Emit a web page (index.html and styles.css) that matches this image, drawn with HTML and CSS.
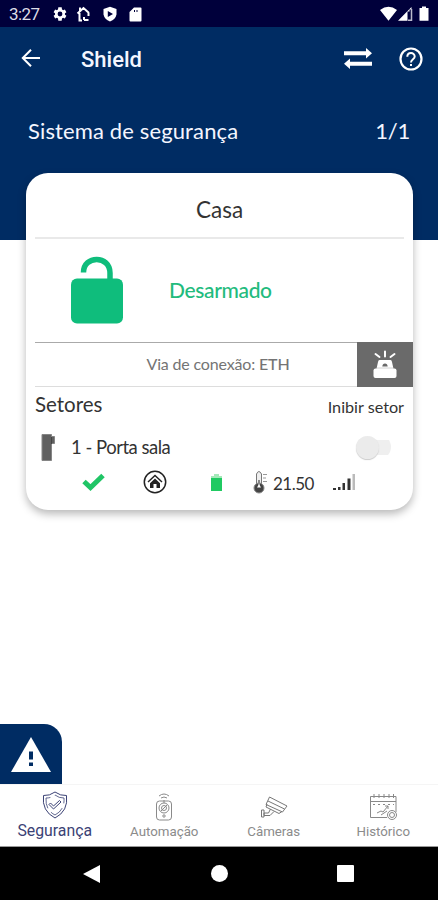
FILE: index.html
```html
<!DOCTYPE html>
<html lang="pt-BR">
<head>
<meta charset="utf-8">
<title>Shield</title>
<link rel="stylesheet" href="styles.css">
</head>
<body>
<div class="screen">
  <header class="hero">
    <div class="status">
      <span class="clock">3:27</span>
      <svg class="s-gear" width="16" height="16" viewBox="0 0 24 24"><path fill="#fff" fill-rule="evenodd" d="M19.4 13a7.500 7.500 0 0 0 0-2l2.200-1.700-2.300-4-2.600 1a7.500 7.500 0 0 0-1.700-1L14.500 2h-5L9 5.300a7.500 7.500 0 0 0-1.700 1l-2.600-1-2.300 4L4.600 11a7.500 7.500 0 0 0 0 2l-2.200 1.700 2.300 4 2.600-1a7.500 7.500 0 0 0 1.700 1l.5 3.300h5l.5-3.300a7.500 7.500 0 0 0 1.700-1l2.600 1 2.300-4zM12 8.400a3.600 3.600 0 1 1 0 7.200 3.600 3.600 0 0 1 0-7.200z"/></svg>
      <svg class="s-home" width="16" height="16" viewBox="0 0 16 16"><path fill="none" stroke="#fff" stroke-width="2" d="M1.500 7.500 7.500 2 13 7M4 1.500v4M3.500 7v7.500H6M8 14h4.500M12.500 7v3M8 14v-3"/></svg>
      <svg class="s-shield" width="16" height="16" viewBox="0 0 16 16"><path fill="#fff" fill-rule="evenodd" d="M8 .8 14.500 3v5.500q-1 5-6.500 7-5.500-2-6.500-7V3zM5.800 5v6L11 8z"/></svg>
      <svg class="s-card" width="13" height="15" viewBox="0 0 13 15"><path fill="#fff" fill-rule="evenodd" d="M5 .5h6.500q1 0 1 1v12q0 1-1 1h-10q-1 0-1-1V5zM5 3v2h1V3zm2.500 0v2h1V3z"/></svg>
      <span class="spacer"></span>
      <svg width="50" height="16" viewBox="0 0 50 16"><path fill="#fff" d="M0 4q8.500-6.500 17 0L8.500 14.800zM18 14.800 31.500 1v2.500h-2v2h-2v9.300z"/><path fill="none" stroke="#bbc" stroke-width="1.500" d="M28 14.200h3.500V3"/><path fill="#fff" d="M42 .5h4V2h2.500v12.800h-9V2H42z"/></svg>
    </div>
    <div class="appbar">
      <svg class="back" width="20" height="20" viewBox="0 0 20 20"><path fill="none" stroke="#fff" stroke-width="2" d="M19 10H2M10 1.800 1.800 10l8.200 8.200"/></svg>
      <h1>Shield</h1>
      <svg class="swap" width="28" height="21" viewBox="0 0 28 21"><path fill="#fff" d="M0 3.300h22V0l6 5.300-6 5.200V7.300H0zM28 13.700H6V10.500l-6 5.300L6 21v-3.300h22z"/></svg>
      <svg class="help" width="24" height="24" viewBox="0 0 24 24"><circle cx="12" cy="12" r="10.500" fill="none" stroke="#fff" stroke-width="2.200"/><path fill="none" stroke="#fff" stroke-width="2" d="M8.300 9.800C8.300 4.800 15.700 5 15.700 9.500c0 2.800-3.700 2.600-3.700 6"/><path fill="#fff" d="M11 17h2v2h-2z"/></svg>
    </div>
    <div class="subhead"><span>Sistema de segurança</span><span class="count">1/1</span></div>
  </header>

  <main class="card">
    <h2>Casa</h2>
    <div class="state">
      <svg width="52" height="68" viewBox="0 0 52 68"><rect y="22.500" width="52" height="45" rx="6" fill="#0fbd7c"/><path fill="none" stroke="#0fbd7c" stroke-width="5.500" d="M12.500 16.500C12.500-1 39 -1 39 17v8"/></svg>
      <span>Desarmado</span>
    </div>
    <div class="link">
      <div class="via">Via de conexão: <b>ETH</b></div>
      <div class="siren"><svg width="24" height="29" viewBox="0 0 24 29"><path fill="none" stroke="#fff" stroke-width="2" stroke-linecap="round" d="m2.500 4 4 3M12 1.500v5M21.500 4l-4 3"/><path fill="#fff" d="M6.500 10h11q1.200 0 1.500 2l1.200 5.500v2H3.800v-2L5 12q.3-2 1.500-2z"/><path fill="#6a6a6a" d="M9.300 16.500q.3-3 2.700-3t2.700 3z"/><path stroke="#aaa" stroke-width=".8" d="M3 18.200h18"/><rect x=".5" y="18.500" width="23" height="9.500" rx="2" fill="#fff"/></svg></div>
    </div>
    <div class="sectors"><span>Setores</span><span class="inhibit">Inibir setor</span></div>
    <div class="zone">
      <svg width="14" height="27" viewBox="0 0 14 27"><path fill="#606060" stroke="#858585" d="M1 .5h9.500v2H13.500v7h-3v17H1z"/><path stroke="#444" d="M10.500 3v7"/></svg>
      <span>1 - Porta sala</span>
      <i class="switch"></i>
    </div>
    <div class="metrics">
      <svg class="check" width="23" height="18" viewBox="0 0 23 18"><path fill="none" stroke="#20c566" stroke-width="5" d="m2 8.500 6.500 6L21 2.500"/></svg>
      <svg class="house" width="24" height="24" viewBox="0 0 24 24"><circle cx="12" cy="12" r="10.700" fill="none" stroke="#222" stroke-width="1.500"/><path fill="none" stroke="#222" stroke-width="1.500" d="m5 12 7-6.500 7 6.500"/><path fill="#222" d="m12 8.500 5 4.700V18h-3.500v-4h-3v4H7v-4.800z"/></svg>
      <svg class="battery" width="11" height="19" viewBox="0 0 11 19"><path fill="#a4e9b9" d="M3 1h5v2h3v4H0V3h3z"/><path fill="#20ca62" d="M0 5h11v13H0z"/></svg>
      <svg class="thermo" width="15" height="24" viewBox="0 0 15 24"><path fill="#eee" stroke="#777" d="M3.500 14V4q2.300-5 5 0v10"/><circle cx="6" cy="18" r="5" fill="#444" stroke="#888"/><path fill="#888" d="M5 10h2v7H5z"/><path fill="#fff" d="m6 14 2 3.500H4z"/><path stroke="#999" d="M10 4.500h4M10 8h3M10 11.500h4"/></svg>
      <span>21.50</span>
      <svg class="signal" width="23" height="17" viewBox="0 0 23 17"><path fill="#333" d="M0 14h3v2H0zM5 13h2.500v3H5zM9.500 9H12v7H9.500zM14.500 4.500H17.500v11.500h-3z"/><path fill="#bbb" d="M19.500 0h2.500v16h-2.500z"/></svg>
    </div>
  </main>

  <div class="alert"><svg width="40" height="35" viewBox="0 0 40 35"><path fill="#fff" d="m20 0 20 35H0z"/><path stroke="#002c63" stroke-width="4" d="M20 14.500v8M20 25.500v3.500"/></svg></div>

  <nav class="tabs">
    <div class="tab active">
      <svg width="26" height="28" viewBox="0 0 26 28"><g fill="none" stroke="#3b4275"><path d="M13 1Q18.500 5 24.500 4.500 26.500 20 13 27-.5 20 1.500 4.500 7.500 5 13 1z"/><path d="M13 4q4 3.200 9 3 .8 12-9 17-9.800-5-9-17 5 .2 9-3z" stroke-width=".8" stroke-dasharray="15 5"/><path d="m7 13.500 1.500-1.500 3 3 6-5.500 1.500 1.500-7.500 7z"/></g></svg>
      <span>Segurança</span>
    </div>
    <div class="tab auto">
      <svg width="18" height="28" viewBox="0 0 18 28"><g fill="none" stroke="#8a8a8a"><path d="M4 3q5-4 10 0M6 5q3-2 6 0"/><rect x="1.500" y="8" width="15" height="19" rx="3"/><circle cx="9" cy="15" r="5"/><circle cx="9" cy="15" r="2.500"/><path d="m6 18 6-6M9 7v3"/><circle cx="9" cy="23" r="1.200"/></g></svg>
      <span>Automação</span>
    </div>
    <div class="tab cam">
      <svg width="28" height="24" viewBox="0 0 28 24"><g fill="none" stroke="#777"><path d="M9.500 2 27 11l-4.500 6L6 9.500zM8 6l16.500 8M7 9l-1 3 13 6.500 3-2M10.500 14l-2 4H4v2.500h6l4-4M1.500 15v7H4v-7z"/></g></svg>
      <span>Câmeras</span>
    </div>
    <div class="tab hist">
      <svg width="29" height="28" viewBox="0 0 29 28"><g fill="none" stroke="#888"><path d="M18 24.500H1.500v-21H27V19M1.500 8.500H27"/><path stroke-dasharray="2 3" d="M4 11.500h21"/><path d="M5 1v4M10 1v4M15 1v4M20 1v4M24.500 1v4M8 20l4-2 2 1 5-6M12 22l6-4M16 13h3v3"/><circle cx="23" cy="22" r="4.500"/><circle cx="23" cy="22" r="2.500"/></g></svg>
      <span>Histórico</span>
    </div>
  </nav>
  <footer class="sysnav">
    <svg width="17" height="18" viewBox="0 0 17 18"><path fill="#fff" d="M17 0v18L0 9z"/></svg>
    <i class="dot"></i>
    <i class="square"></i>
  </footer>
</div>
</body>
</html>
```

FILE: styles.css
```css
* { box-sizing: border-box; }
body { margin: 0; background: #fff; font-family: Lato, sans-serif; }
svg { display: block; flex: none; }
.screen { width: 438px; height: 900px; display: flex; flex-direction: column; overflow: hidden; }
.hero { height: 240px; flex: none; background: #002c63; color: #f4f6ff; }
.status { height: 27px; background: #00003b; display: flex; align-items: center; padding: 1px 8px 0 9px; font: 17px Roboto, sans-serif; }
.clock { width: 43px; letter-spacing: -.6px; color: #dddde6; }
.s-home { margin-left: 8px; }
.s-shield { margin-left: 10px; }
.s-card { margin-left: 11px; }
.spacer { flex: 1; }
.appbar { height: 63px; display: flex; align-items: center; padding: 0 15px 0 21px; }
.appbar h1 { margin: 2px 0 0 40px; flex: 1; font: 500 22px Roboto, sans-serif; }
.back { margin-bottom: 2px; }
.swap { margin-right: 27px; }
.subhead { display: flex; justify-content: space-between; padding: 26px 28px 0; font-size: 22px; line-height: 30px; letter-spacing: .13px; }
.count { letter-spacing: -.2px; }
.card { width: 387px; height: 337px; flex: none; margin: -67px 0 0 26px; border-radius: 22px; background: #fff; box-shadow: 0 4px 8px rgba(0,0,0,.28); color: #333; }
.card h2 { height: 66px; margin: 0 9px; border-bottom: 2px solid #e9e9e9; text-align: center; font-size: 22.5px; font-weight: 400; line-height: 73px; }
.state { height: 103px; display: flex; align-items: center; padding: 0 0 1px 45px; gap: 46px; font-size: 21px; font-weight: 500; letter-spacing: -.35px; color: #22bb7d; }
.state span { padding-bottom: 2px; }
.link { height: 45px; display: flex; padding-left: 9px; font-size: 16px; letter-spacing: -.17px; color: #747474; }
.via { flex: 1; display: flex; justify-content: center; align-items: center; gap: 4px; border-top: 1px solid #aaa; border-bottom: 1px solid #ddd; padding: 0 0 2px 44px; }
.via b { font-weight: 500; }
.siren { width: 56px; background: #6a6a6a; display: flex; align-items: center; justify-content: center; }
.sectors { height: 38px; display: flex; justify-content: space-between; align-items: center; padding: 0 9px 5px; font-size: 20.5px; }
.inhibit { font-size: 16.2px; padding-top: 5px; }
.zone { height: 42px; display: flex; align-items: center; padding: 2px 22px 0 15px; font-size: 18.5px; letter-spacing: -.5px; }
.zone span { flex: 1; margin-left: 16px; }
.switch { width: 35px; height: 24px; display: flex; align-items: center; background: linear-gradient(#efefef, #efefef) right center / 30px 15px no-repeat; border-radius: 12px; }
.switch::before { content: ""; width: 23px; height: 23px; border-radius: 50%; background: #ebebeb; box-shadow: 0 1px 1px #ccc; }
.metrics { height: 32px; display: flex; align-items: center; padding: 0 0 2px 56px; font-size: 17px; letter-spacing: -.5px; }
.house { margin-left: 38px; }
.battery { margin-left: 44px; }
.thermo { margin-left: 31px; }
.metrics span { width: 42px; margin: 3px 0 0 5px; }
.signal { margin-left: 18px; }
.alert { width: 62px; height: 60px; margin-top: auto; flex: none; background: #002c63; border-radius: 0 18px 0 0; display: flex; align-items: center; justify-content: center; }
.tabs { height: 63px; flex: none; display: flex; border-top: 1px solid #f5f5f5; border-bottom: 1px solid #999; font: 13.3px Roboto, sans-serif; color: #8b8b8b; }
.tab { flex: 1; display: flex; flex-direction: column; align-items: center; padding-top: 8px; }
.tab span { margin-top: 2px; line-height: 18px; }
.active { color: #3b4275; font-size: 15.8px; padding-top: 6px; }
.active span { margin-top: 3px; }
.cam svg { margin: 2px 0; }
.sysnav { height: 53px; flex: none; background: #000; display: flex; align-items: center; padding-left: 83px; }
.dot { width: 17px; height: 17px; border-radius: 50%; background: #fff; margin-left: 111px; }
.square { width: 17px; height: 17px; border-radius: 1px; background: #fff; margin-left: 109px; }
```
